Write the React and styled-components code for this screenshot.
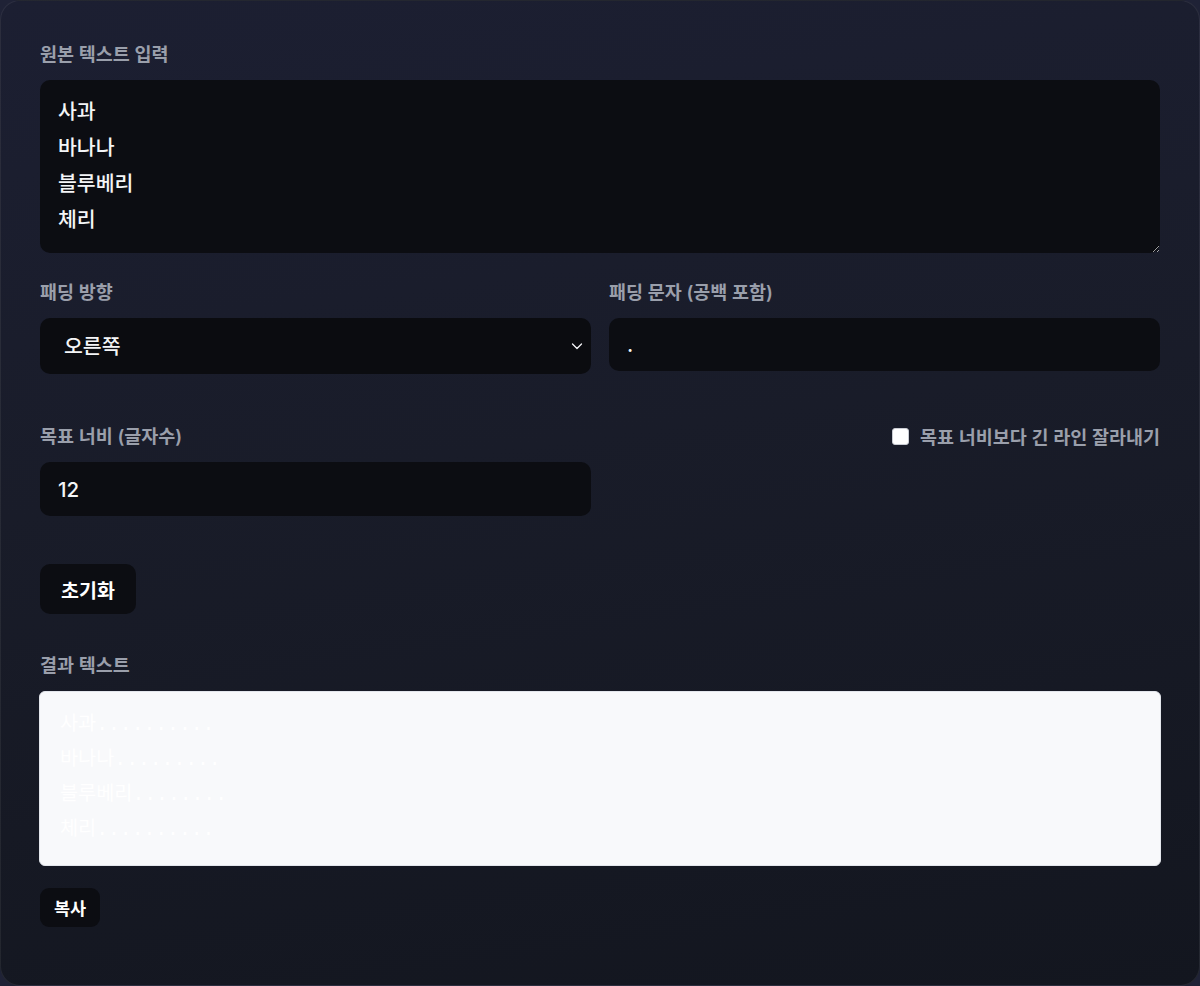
import React, { useMemo, useState } from "react";
import styled, { createGlobalStyle } from "styled-components";

const GlobalStyle = createGlobalStyle`
  html, body {
    margin: 0;
    padding: 0;
    background: #1f2236;
  }
  body {
    font-family: Inter, "Noto Sans CJK KR", sans-serif;
    -webkit-font-smoothing: antialiased;
  }
  * { box-sizing: border-box; }
`;

const Card = styled.div`
  width: 1200px;
  min-height: 986px;
  border: 1px solid rgba(255, 255, 255, 0.07);
  border-radius: 20px;
  background: linear-gradient(172deg, #1c1f32 0%, #191c29 45%, #13161f 100%);
  padding: 42px 39px 40px;
  display: flex;
  flex-direction: column;
`;

const Field = styled.div`
  display: flex;
  flex-direction: column;
  margin-bottom: ${(p) => p.$mb || 0}px;
`;

const Label = styled.label`
  font-size: 18.5px;
  line-height: 22px;
  font-weight: 600;
  color: #9a9fab;
  margin-bottom: 15px;
`;

const TextArea = styled.textarea`
  display: block;
  width: 100%;
  height: ${(p) => p.$h}px;
  padding: 14px 18px;
  border: none;
  border-radius: 10px;
  background: #0c0d12;
  color: #f4f5f7;
  font-family: Inter, "Noto Sans CJK KR", sans-serif;
  font-size: 20.5px;
  line-height: 36px;
  font-weight: 500;
  color-scheme: dark;
  resize: vertical;
  outline: none;
`;

const ResultArea = styled.textarea`
  display: block;
  width: calc(100% + 2px);
  margin-left: -1px;
  height: 175px;
  padding: 16px 20px;
  border: 1px solid #e3e6ec;
  border-radius: 6px;
  background: #f8f9fb;
  color: #ffffff;
  font-family: "Liberation Mono", "Noto Sans CJK KR", monospace;
  font-size: 19.7px;
  line-height: 35px;
  resize: none;
  outline: none;
`;

const Row = styled.div`
  display: grid;
  grid-template-columns: 1fr 1fr;
  column-gap: 18px;
  margin-bottom: ${(p) => p.$mb || 0}px;
`;

const SelectWrap = styled.div`
  position: relative;
`;

const Select = styled.select`
  appearance: none;
  width: 100%;
  height: 56px;
  padding: 0 40px 0 24px;
  border: none;
  border-radius: 10px;
  background: #0b0c10;
  color: #f4f5f7;
  font-family: Inter, "Noto Sans CJK KR", sans-serif;
  font-size: 20.5px;
  font-weight: 500;
  outline: none;
`;

const Chevron = styled.svg`
  position: absolute;
  right: 6px;
  top: 50%;
  transform: translateY(-50%);
  pointer-events: none;
`;

const Input = styled.input`
  width: 100%;
  height: ${(p) => p.$h}px;
  padding: 0 18px;
  border: none;
  border-radius: 10px;
  background: #0c0d12;
  color: #f4f5f7;
  font-family: Inter, "Noto Sans CJK KR", sans-serif;
  font-size: 20.5px;
  font-weight: 500;
  outline: none;
  -moz-appearance: textfield;
  &::-webkit-outer-spin-button,
  &::-webkit-inner-spin-button {
    -webkit-appearance: none;
    margin: 0;
  }
`;

const CheckRow = styled.label`
  justify-self: end;
  align-self: start;
  display: flex;
  align-items: center;
  gap: 11px;
  height: 22px;
  font-size: 18.5px;
  font-weight: 600;
  color: #9a9fab;
  cursor: pointer;
`;

const Check = styled.input`
  appearance: none;
  margin: 0;
  width: 17px;
  height: 17px;
  border-radius: 3px;
  border: 1px solid #c9ccd3;
  background: #ffffff;
`;

const Button = styled.button`
  align-self: flex-start;
  height: ${(p) => (p.$small ? 39 : 50)}px;
  padding: 0 ${(p) => (p.$small ? 14 : 21)}px;
  border: none;
  border-radius: ${(p) => (p.$small ? 9 : 10)}px;
  background: #0c0d12;
  color: #ffffff;
  font-family: Inter, "Noto Sans CJK KR", sans-serif;
  font-size: ${(p) => (p.$small ? 17.5 : 19.5)}px;
  font-weight: 700;
  cursor: pointer;
  margin-bottom: ${(p) => p.$mb || 0}px;
`;

const DEFAULT_TEXT = "사과\n바나나\n블루베리\n체리";

function padLines(text, dir, ch, width, truncate) {
  const fill = ch || " ";
  return text
    .split("\n")
    .map((line) => {
      let l = line;
      if (truncate && l.length > width) l = l.slice(0, width);
      const n = Math.max(0, width - l.length);
      const pad = fill.repeat(n).slice(0, n);
      if (dir === "left") return pad + l;
      if (dir === "both") {
        const a = Math.floor(n / 2);
        return pad.slice(0, a) + l + pad.slice(0, n - a);
      }
      return l + pad;
    })
    .join("\n");
}

export default function App() {
  const [text, setText] = useState(DEFAULT_TEXT);
  const [dir, setDir] = useState("right");
  const [ch, setCh] = useState(".");
  const [width, setWidth] = useState(12);
  const [truncate, setTruncate] = useState(false);

  const result = useMemo(
    () => padLines(text, dir, ch, Number(width) || 0, truncate),
    [text, dir, ch, width, truncate]
  );

  const reset = () => {
    setText(DEFAULT_TEXT);
    setDir("right");
    setCh(".");
    setWidth(12);
    setTruncate(false);
  };

  return (
    <>
      <GlobalStyle />
      <Card>
        <Field $mb={28}>
          <Label>원본 텍스트 입력</Label>
          <TextArea $h={173} value={text} onChange={(e) => setText(e.target.value)} />
        </Field>

        <Row $mb={51}>
          <Field>
            <Label>패딩 방향</Label>
            <SelectWrap>
              <Select value={dir} onChange={(e) => setDir(e.target.value)}>
                <option value="right">오른쪽</option>
                <option value="left">왼쪽</option>
                <option value="both">양쪽</option>
              </Select>
              <Chevron width="16" height="16" viewBox="0 0 16 16" fill="none">
                <path d="M3.5 6 L8 10.5 L12.5 6" stroke="#f4f5f7" strokeWidth="1.3" strokeLinecap="round" strokeLinejoin="round" />
              </Chevron>
            </SelectWrap>
          </Field>
          <Field>
            <Label>패딩 문자 (공백 포함)</Label>
            <Input $h={53} value={ch} onChange={(e) => setCh(e.target.value)} />
          </Field>
        </Row>

        <Row $mb={48}>
          <Field>
            <Label>목표 너비 (글자수)</Label>
            <Input $h={54} type="number" value={width} onChange={(e) => setWidth(e.target.value)} />
          </Field>
          <CheckRow>
            <Check type="checkbox" checked={truncate} onChange={(e) => setTruncate(e.target.checked)} />
            목표 너비보다 긴 라인 잘라내기
          </CheckRow>
        </Row>

        <Button $mb={40} onClick={reset}>초기화</Button>

        <Field $mb={22}>
          <Label>결과 텍스트</Label>
          <ResultArea readOnly value={result} />
        </Field>

        <Button $small onClick={() => navigator.clipboard && navigator.clipboard.writeText(result)}>복사</Button>
      </Card>
    </>
  );
}
